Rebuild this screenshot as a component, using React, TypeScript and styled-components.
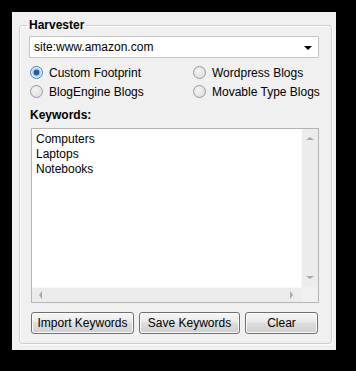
import React from 'react';
import styled, { createGlobalStyle } from 'styled-components';

const GlobalStyle = createGlobalStyle`
  html, body {
    margin: 0;
    padding: 0;
    background: #000;
  }
  body {
    font-family: "Liberation Sans", Arial, sans-serif;
    font-size: 12px;
    color: #000;
  }
`;

const options = [
  { label: 'Custom Footprint', checked: true },
  { label: 'Wordpress Blogs', checked: false },
  { label: 'BlogEngine Blogs', checked: false },
  { label: 'Movable Type Blogs', checked: false },
];

const keywords = ['Computers', 'Laptops', 'Notebooks'];

export default function App() {
  return (
    <>
      <GlobalStyle />
      <Screen>
        <Window>
          <Group>
            <Legend>Harvester</Legend>
            <Combo>
              <ComboText>site:www.amazon.com</ComboText>
              <ComboArrow />
            </Combo>
            <RadioGrid>
              {options.map(o => (
                <RadioRow key={o.label}>
                  <RadioCircle $checked={o.checked} />
                  <span>{o.label}</span>
                </RadioRow>
              ))}
            </RadioGrid>
            <Label>Keywords:</Label>
            <TextBox>
              <TextArea>
                {keywords.map(k => (
                  <div key={k}>{k}</div>
                ))}
              </TextArea>
              <VScroll>
                <Arrow $dir="up" />
                <Arrow $dir="down" />
              </VScroll>
              <HScroll>
                <Arrow $dir="left" />
                <Arrow $dir="right" />
              </HScroll>
              <Corner />
            </TextBox>
            <ButtonRow>
              <Button $w={103}>Import Keywords</Button>
              <Button $w={101}>Save Keywords</Button>
              <Button $w={73}>Clear</Button>
            </ButtonRow>
          </Group>
        </Window>
      </Screen>
    </>
  );
}

const Screen = styled.div`
  width: 356px;
  height: 371px;
  padding: 12px;
  box-sizing: border-box;
`;

const Window = styled.div`
  width: 324px;
  height: 338px;
  background: #f0f0f0;
  padding: 6px 5px 6px 7px;
  box-sizing: border-box;
`;

const Group = styled.fieldset`
  margin: 0;
  width: 312px;
  height: 326px;
  box-sizing: border-box;
  border: 1px solid #d0d0d0;
  border-radius: 3px;
  box-shadow: inset 1px 1px 0 #fff, 1px 1px 0 #fff;
  padding: 4px 11px 0 9px;
  display: flex;
  flex-direction: column;
`;

const Legend = styled.legend`
  font-weight: bold;
  font-size: 12px;
  padding: 0 2px;
  margin-left: -2px;
  line-height: 14px;
`;

const Combo = styled.div`
  height: 22px;
  box-sizing: border-box;
  background: #fff;
  border: 1px solid #c5c5c5;
  border-radius: 1px;
  display: flex;
  align-items: center;
  padding: 0 4px;
  margin-right: 1px;
`;

const ComboText = styled.span`
  flex: 1;
`;

const ComboArrow = styled.span`
  width: 0;
  height: 0;
  border-left: 4px solid transparent;
  border-right: 4px solid transparent;
  border-top: 4px solid #000;
  margin-right: 2px;
  margin-top: 1px;
`;

const RadioGrid = styled.div`
  display: grid;
  grid-template-columns: 163px 1fr;
  grid-auto-rows: 19px;
  margin-top: 5px;
`;

const RadioRow = styled.div`
  display: flex;
  align-items: center;
  gap: 6px;
  padding-left: 1px;
  white-space: nowrap;
`;

const RadioCircle = styled.span<{ $checked: boolean }>`
  flex: none;
  width: 13px;
  height: 13px;
  box-sizing: border-box;
  border-radius: 50%;
  border: 1px solid ${p => (p.$checked ? '#4a7fb0' : '#9a9a9a')};
  background: ${p =>
    p.$checked
      ? 'radial-gradient(circle, #1f5f9e 0 2.5px, #6fb3ea 3px, #dceaf6 4.5px, #f6f6f6 6px)'
      : 'radial-gradient(circle at 40% 35%, #f4f4f4, #d8d8d8)'};
`;

const Label = styled.div`
  font-weight: bold;
  margin-top: 7px;
  padding-left: 1px;
  line-height: 14px;
`;

const TextBox = styled.div`
  margin: 6px 0 0 2px;
  width: 288px;
  height: 175px;
  box-sizing: border-box;
  border: 1px solid #b4b4b4;
  background: #fff;
  display: grid;
  grid-template-columns: 1fr 17px;
  grid-template-rows: 1fr 15px;
`;

const TextArea = styled.div`
  padding: 3px 4px;
  line-height: 15px;
`;

const VScroll = styled.div`
  background: #ececec;
  border-left: 1px solid #f7f7f7;
  display: flex;
  flex-direction: column;
  justify-content: space-between;
  align-items: center;
  padding: 8px 0 8px;
`;

const HScroll = styled.div`
  background: #ececec;
  border-top: 1px solid #f7f7f7;
  display: flex;
  justify-content: space-between;
  align-items: center;
  padding: 0 8px 0 7px;
`;

const Corner = styled.div`
  background: #f0f0f0;
`;

const Arrow = styled.span<{ $dir: 'up' | 'down' | 'left' | 'right' }>`
  width: 0;
  height: 0;
  ${p =>
    p.$dir === 'up'
      ? 'border-left: 4px solid transparent; border-right: 4px solid transparent; border-bottom: 3px solid #a8a8a8;'
      : p.$dir === 'down'
      ? 'border-left: 4px solid transparent; border-right: 4px solid transparent; border-top: 3px solid #a8a8a8;'
      : p.$dir === 'left'
      ? 'border-top: 4px solid transparent; border-bottom: 4px solid transparent; border-right: 3px solid #a8a8a8;'
      : 'border-top: 4px solid transparent; border-bottom: 4px solid transparent; border-left: 3px solid #a8a8a8;'}
`;

const ButtonRow = styled.div`
  display: flex;
  gap: 5px;
  margin: 9px 0 0 2px;
`;

const Button = styled.button<{ $w: number }>`
  width: ${p => p.$w}px;
  height: 22px;
  box-sizing: border-box;
  border: 1px solid #707070;
  border-radius: 3px;
  background: linear-gradient(#f6f6f6 0%, #eaeaea 45%, #dddddd 50%, #cfcfcf 100%);
  box-shadow: inset 0 0 0 1px #fcfcfc;
  font-family: "Liberation Sans", Arial, sans-serif;
  font-size: 12px;
  color: #000;
  padding: 0;
`;
